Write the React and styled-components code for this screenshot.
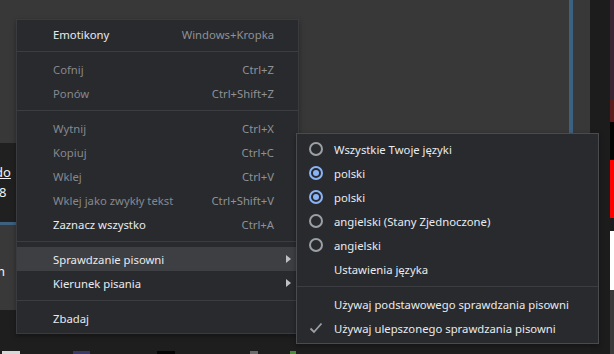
import React from "react";
import styled, { createGlobalStyle } from "styled-components";

const GlobalStyle = createGlobalStyle`
  * {
    margin: 0;
    padding: 0;
    box-sizing: border-box;
  }
  body {
    background: #1e1e1e;
    font-family: "Noto Sans", "Open Sans", sans-serif;
  }
`;

const Screen = styled.div`
  position: relative;
  width: 614px;
  height: 354px;
  display: flex;
  overflow: hidden;
  background: #1e1e1e;
`;

const Workspace = styled.div`
  width: 590px;
  display: flex;
  flex-direction: column;
`;

const TopPanel = styled.div`
  height: 143px;
  background: #383838;
  display: flex;
`;

const Fill = styled.div`
  flex: 1;
`;

const ScrollLine = styled.div`
  width: 4px;
  margin-right: 17px;
  background: #3d6180;
`;

const Lower = styled.div`
  flex: 1;
  display: flex;
`;

const SideColumn = styled.div`
  width: 16px;
  display: flex;
  flex-direction: column;
`;

const SideBlock = styled.div`
  height: ${(p) => p.$h}px;
  background: ${(p) => p.$bg};
  border-top: ${(p) => (p.$accent ? "3px solid #3d6180" : "none")};
  padding-top: ${(p) => p.$pad || 0}px;
  color: #f2f2f2;
  font-size: 13px;
  line-height: 20px;
  overflow: hidden;
  white-space: nowrap;
`;

const Clipped = styled.div`
  margin-left: ${(p) => p.$shift}px;
  text-decoration: ${(p) => (p.$underline ? "underline" : "none")};
`;

const Taskbar = styled.div`
  height: 3px;
  display: flex;
  align-items: stretch;
`;

const TaskIcon = styled.div`
  width: ${(p) => p.$w}px;
  margin-left: ${(p) => p.$gap}px;
  background: ${(p) => p.$bg};
`;

const Gutter = styled.div`
  width: 20px;
  background: #1c1c1c;
`;

const Thumbs = styled.div`
  width: 4px;
  display: flex;
  flex-direction: column;
`;

const Thumb = styled.div`
  height: ${(p) => p.$h}px;
  background: ${(p) => p.$bg};
`;

const Menu = styled.div`
  position: absolute;
  left: ${(p) => p.$x}px;
  top: ${(p) => p.$y}px;
  width: ${(p) => p.$w}px;
  padding: ${(p) => p.$padTop}px 0 3px;
  background: #292a2d;
  border: 1px solid ${(p) => p.$border};
  box-shadow: 0 2px 5px rgba(0, 0, 0, 0.35);
  font-size: 11.3px;
`;

const Item = styled.div`
  height: 24px;
  display: flex;
  align-items: center;
  padding-left: ${(p) => p.$indent}px;
  padding-right: 24px;
  color: ${(p) => (p.$disabled ? "#85888d" : "#e8eaed")};
  background: ${(p) => (p.$active ? "#3e3f42" : "transparent")};
  position: relative;
  white-space: nowrap;
`;

const Label = styled.span`
  flex: 1;
`;

const Shortcut = styled.span`
  color: #8e9196;
`;

const Arrow = styled.span`
  position: absolute;
  right: 7px;
  top: 8px;
  width: 0;
  height: 0;
  border-top: 4px solid transparent;
  border-bottom: 4px solid transparent;
  border-left: 5px solid #bdc1c6;
`;

const Separator = styled.div`
  height: 11px;
  display: flex;
  align-items: center;
  &::after {
    content: "";
    flex: 1;
    height: 1px;
    background: #3c3d41;
  }
`;

const Mark = styled.span`
  width: 37px;
  display: flex;
  justify-content: center;
  align-items: center;
`;

const Radio = styled.span`
  width: 14px;
  height: 14px;
  border-radius: 50%;
  border: 2px solid ${(p) => (p.$on ? "#8ab4f8" : "#9aa0a6")};
  display: flex;
  align-items: center;
  justify-content: center;
  &::after {
    content: "";
    width: 6px;
    height: 6px;
    border-radius: 50%;
    background: ${(p) => (p.$on ? "#8ab4f8" : "transparent")};
  }
`;

const mainItems = [
  { label: "Emotikony", key: "Windows+Kropka" },
  "sep",
  { label: "Cofnij", key: "Ctrl+Z", disabled: true },
  { label: "Ponów", key: "Ctrl+Shift+Z", disabled: true },
  "sep",
  { label: "Wytnij", key: "Ctrl+X", disabled: true },
  { label: "Kopiuj", key: "Ctrl+C", disabled: true },
  { label: "Wklej", key: "Ctrl+V", disabled: true },
  { label: "Wklej jako zwykły tekst", key: "Ctrl+Shift+V", disabled: true },
  { label: "Zaznacz wszystko", key: "Ctrl+A" },
  "sep",
  { label: "Sprawdzanie pisowni", sub: true, active: true },
  { label: "Kierunek pisania", sub: true },
  "sep",
  { label: "Zbadaj" },
];

const spellItems = [
  { label: "Wszystkie Twoje języki", mark: "radio" },
  { label: "polski", mark: "radio", on: true },
  { label: "polski", mark: "radio", on: true },
  { label: "angielski (Stany Zjednoczone)", mark: "radio" },
  { label: "angielski", mark: "radio" },
  { label: "Ustawienia języka" },
  "sep",
  { label: "Używaj podstawowego sprawdzania pisowni" },
  { label: "Używaj ulepszonego sprawdzania pisowni", mark: "check" },
];

function Check() {
  return (
    <svg width="14" height="12" viewBox="0 0 14 12">
      <path d="M1.5 6.5 L5 10 L12.5 1.5" fill="none" stroke="#9aa0a6" strokeWidth="1.8" />
    </svg>
  );
}

export default function App() {
  return (
    <>
      <GlobalStyle />
      <Screen>
        <Workspace>
          <TopPanel>
            <Fill />
            <ScrollLine />
          </TopPanel>
          <Lower>
            <SideColumn>
              <SideBlock $h={79} $bg="#202020" $pad={19}>
                <Clipped $shift={-5} $underline>
                  do
                </Clipped>
                <Clipped $shift={-1}>8</Clipped>
              </SideBlock>
              <SideBlock $h={88} $bg="#393939" $accent $pad={36}>
                <Clipped $shift={-3}>n</Clipped>
              </SideBlock>
              <Fill />
            </SideColumn>
            <Fill />
          </Lower>
          <Taskbar>
            <TaskIcon $w={18} $gap={2} $bg="#d8d8d8" />
            <TaskIcon $w={17} $gap={53} $bg="#3b3a66" />
            <TaskIcon $w={18} $gap={67} $bg="#050505" />
            <TaskIcon $w={8} $gap={75} $bg="#6a6a6a" />
            <TaskIcon $w={6} $gap={32} $bg="#4b8a3a" />
          </Taskbar>
        </Workspace>
        <Gutter />
        <Thumbs>
          <Thumb $h={100} $bg="#3a2632" />
          <Thumb $h={22} $bg="#5a1c1c" />
          <Thumb $h={38} $bg="#050505" />
          <Thumb $h={58} $bg="#ff0000" />
          <Thumb $h={13} $bg="#1c1c1c" />
          <Thumb $h={59} $bg="#ffffff" />
          <Thumb $h={64} $bg="#3a3a3a" />
        </Thumbs>

        <Menu $x={16} $y={19} $w={283} $padTop={2} $border="#3a3b3e">
          {mainItems.map((it, i) =>
            it === "sep" ? (
              <Separator key={i} />
            ) : (
              <Item key={i} $indent={36} $disabled={it.disabled} $active={it.active}>
                <Label>{it.label}</Label>
                {it.key && <Shortcut>{it.key}</Shortcut>}
                {it.sub && <Arrow />}
              </Item>
            )
          )}
        </Menu>

        <Menu $x={296} $y={133} $w={303} $padTop={3} $border="#4a4b4e">
          {spellItems.map((it, i) =>
            it === "sep" ? (
              <Separator key={i} />
            ) : (
              <Item key={i} $indent={0}>
                <Mark>
                  {it.mark === "radio" && <Radio $on={it.on} />}
                  {it.mark === "check" && <Check />}
                </Mark>
                <Label>{it.label}</Label>
              </Item>
            )
          )}
        </Menu>
      </Screen>
    </>
  );
}
